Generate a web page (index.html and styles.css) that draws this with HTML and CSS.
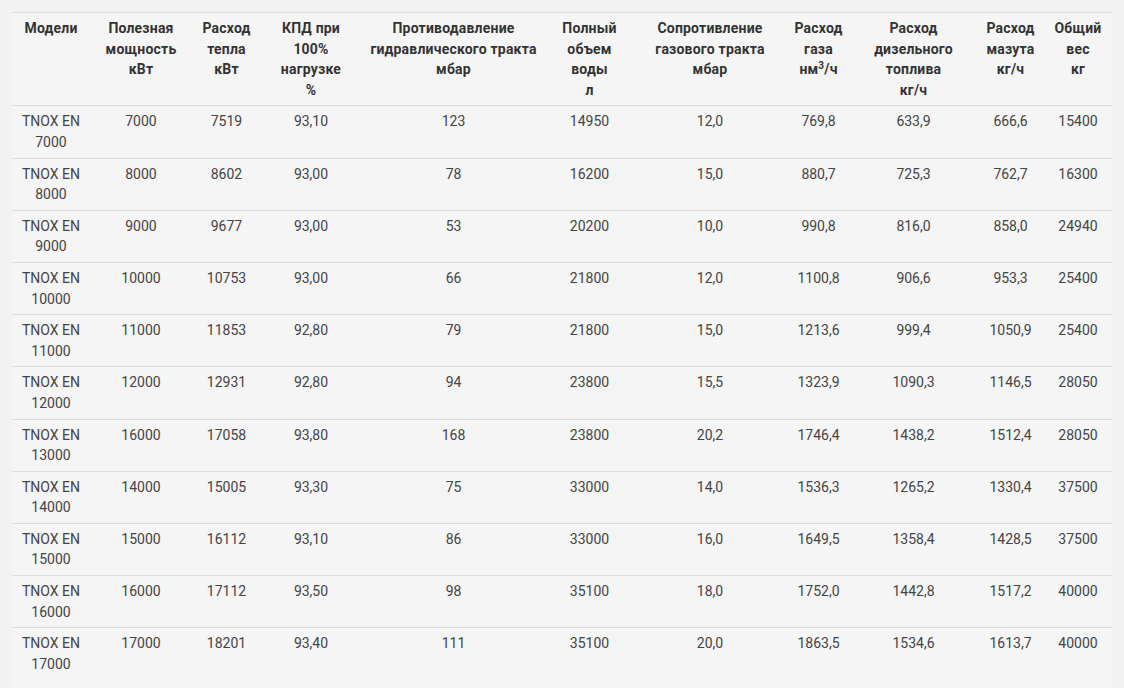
FILE: index.html
```html
<!DOCTYPE html>
<html lang="ru">
<head>
<meta charset="utf-8">
<title>TNOX EN</title>
<link rel="stylesheet" href="styles.css">
</head>
<body>
<div class="panel">
<table class="spec">
  <colgroup>
    <col class="w1"><col class="w2"><col class="w3"><col class="w4"><col class="w5"><col class="w6"><col class="w7"><col class="w8"><col class="w9"><col class="w10"><col class="w11">
  </colgroup>
  <thead>
    <tr>
      <th>Модели</th>
      <th>Полезная мощность<br>кВт</th>
      <th>Расход тепла<br>кВт</th>
      <th>КПД при<br>100%<br>нагрузке<br>%</th>
      <th>Противодавление гидравлического тракта<br>мбар</th>
      <th>Полный объем воды<br>л</th>
      <th>Сопротивление газового тракта<br>мбар</th>
      <th>Расход газа<br>нм<sup>3</sup>/ч</th>
      <th>Расход дизельного топлива<br>кг/ч</th>
      <th>Расход мазута<br>кг/ч</th>
      <th>Общий вес<br>кг</th>
    </tr>
  </thead>
  <tbody>
    <tr><td>TNOX EN 7000</td><td>7000</td><td>7519</td><td>93,10</td><td>123</td><td>14950</td><td>12,0</td><td>769,8</td><td>633,9</td><td>666,6</td><td>15400</td></tr>
    <tr><td>TNOX EN 8000</td><td>8000</td><td>8602</td><td>93,00</td><td>78</td><td>16200</td><td>15,0</td><td>880,7</td><td>725,3</td><td>762,7</td><td>16300</td></tr>
    <tr><td>TNOX EN 9000</td><td>9000</td><td>9677</td><td>93,00</td><td>53</td><td>20200</td><td>10,0</td><td>990,8</td><td>816,0</td><td>858,0</td><td>24940</td></tr>
    <tr><td>TNOX EN 10000</td><td>10000</td><td>10753</td><td>93,00</td><td>66</td><td>21800</td><td>12,0</td><td>1100,8</td><td>906,6</td><td>953,3</td><td>25400</td></tr>
    <tr><td>TNOX EN 11000</td><td>11000</td><td>11853</td><td>92,80</td><td>79</td><td>21800</td><td>15,0</td><td>1213,6</td><td>999,4</td><td>1050,9</td><td>25400</td></tr>
    <tr><td>TNOX EN 12000</td><td>12000</td><td>12931</td><td>92,80</td><td>94</td><td>23800</td><td>15,5</td><td>1323,9</td><td>1090,3</td><td>1146,5</td><td>28050</td></tr>
    <tr><td>TNOX EN 13000</td><td>16000</td><td>17058</td><td>93,80</td><td>168</td><td>23800</td><td>20,2</td><td>1746,4</td><td>1438,2</td><td>1512,4</td><td>28050</td></tr>
    <tr><td>TNOX EN 14000</td><td>14000</td><td>15005</td><td>93,30</td><td>75</td><td>33000</td><td>14,0</td><td>1536,3</td><td>1265,2</td><td>1330,4</td><td>37500</td></tr>
    <tr><td>TNOX EN 15000</td><td>15000</td><td>16112</td><td>93,10</td><td>86</td><td>33000</td><td>16,0</td><td>1649,5</td><td>1358,4</td><td>1428,5</td><td>37500</td></tr>
    <tr><td>TNOX EN 16000</td><td>16000</td><td>17112</td><td>93,50</td><td>98</td><td>35100</td><td>18,0</td><td>1752,0</td><td>1442,8</td><td>1517,2</td><td>40000</td></tr>
    <tr><td>TNOX EN 17000</td><td>17000</td><td>18201</td><td>93,40</td><td>111</td><td>35100</td><td>20,0</td><td>1863,5</td><td>1534,6</td><td>1613,7</td><td>40000</td></tr>
  </tbody>
</table>
</div>
</body>
</html>
```

FILE: styles.css
```css
html, body {
  margin: 0;
  background: #f2f2f2;
}
body {
  padding: 12px;
  font-family: Roboto, "Liberation Sans", sans-serif;
  font-size: 14px;
  color: #444;
}
.panel {
  width: 1100px;
  background: #f5f5f5;
  padding-bottom: 20px;
}
.spec {
  width: 1100px;
  table-layout: fixed;
  border-collapse: collapse;
}
.w1 { width: 78px; }
.w2 { width: 102px; }
.w3 { width: 69px; }
.w4 { width: 100px; }
.w5 { width: 185px; }
.w6 { width: 87px; }
.w7 { width: 154px; }
.w8 { width: 63px; }
.w9 { width: 127px; }
.w10 { width: 67px; }
.w11 { width: 68px; }
.spec th,
.spec td {
  padding: 5px 6px;
  line-height: 20.6px;
  text-align: center;
  vertical-align: top;
  border-top: 1px solid #dedede;
}
.spec th {
  font-weight: 700;
  color: #333;
  letter-spacing: 0.2px;
}
.spec td {
  font-weight: 400;
  color: #444;
}
.spec sup {
  font-size: 10px;
  line-height: 0;
  vertical-align: 5px;
}
```
